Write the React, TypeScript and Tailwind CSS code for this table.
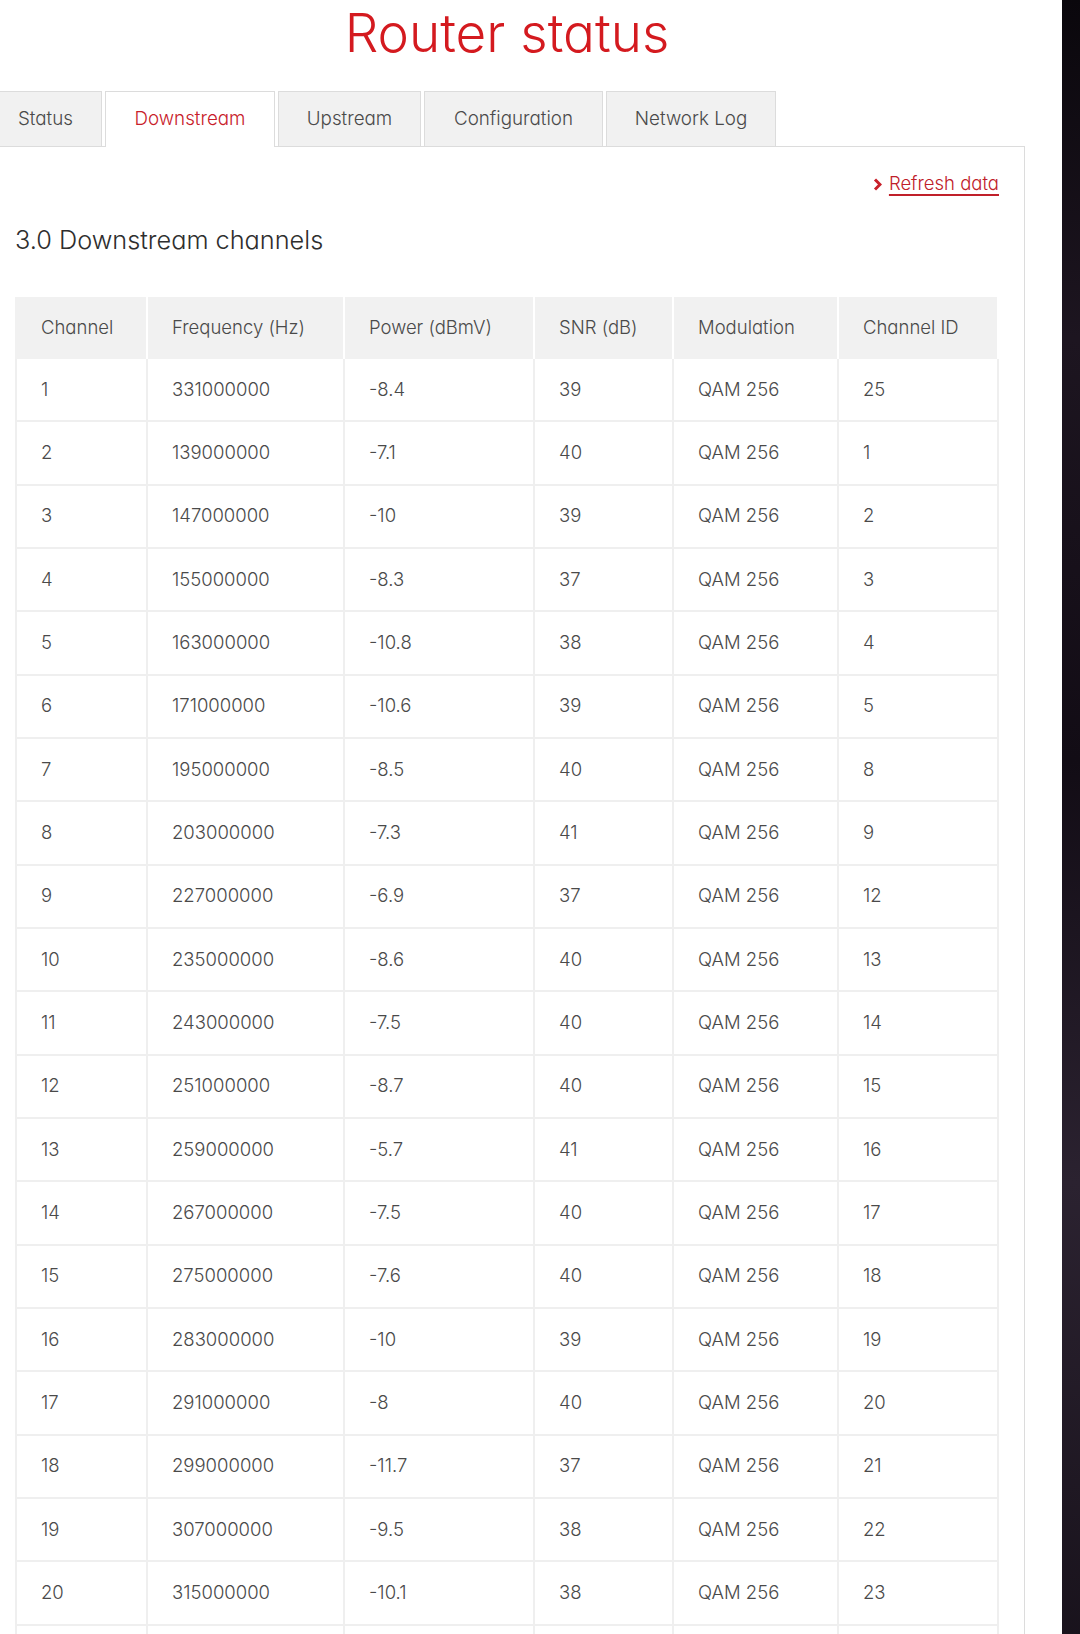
import React from 'react'

type Row = [number, string, string, number, number]

const rows: Row[] = [
  [1, '331000000', '-8.4', 39, 25],
  [2, '139000000', '-7.1', 40, 1],
  [3, '147000000', '-10', 39, 2],
  [4, '155000000', '-8.3', 37, 3],
  [5, '163000000', '-10.8', 38, 4],
  [6, '171000000', '-10.6', 39, 5],
  [7, '195000000', '-8.5', 40, 8],
  [8, '203000000', '-7.3', 41, 9],
  [9, '227000000', '-6.9', 37, 12],
  [10, '235000000', '-8.6', 40, 13],
  [11, '243000000', '-7.5', 40, 14],
  [12, '251000000', '-8.7', 40, 15],
  [13, '259000000', '-5.7', 41, 16],
  [14, '267000000', '-7.5', 40, 17],
  [15, '275000000', '-7.6', 40, 18],
  [16, '283000000', '-10', 39, 19],
  [17, '291000000', '-8', 40, 20],
  [18, '299000000', '-11.7', 37, 21],
  [19, '307000000', '-9.5', 38, 22],
  [20, '315000000', '-10.1', 38, 23],
]

const tabs = [
  { label: 'Status', w: 'w-[102px] border-l-0 justify-start pl-[18px]' },
  { label: 'Downstream', w: 'w-[170px]', active: true },
  { label: 'Upstream', w: 'w-[143px]' },
  { label: 'Configuration', w: 'w-[179px]' },
  { label: 'Network Log', w: 'w-[170px]' },
]

const headers = [
  { label: 'Channel', w: 'w-[133px] border-l-2 border-l-[#f1f1f1]' },
  { label: 'Frequency (Hz)', w: 'w-[197px]' },
  { label: 'Power (dBmV)', w: 'w-[190px]' },
  { label: 'SNR (dB)', w: 'w-[139px]' },
  { label: 'Modulation', w: 'w-[165px]' },
  { label: 'Channel ID', w: 'w-[160px]' },
]

function Chevron() {
  return (
    <svg width="9" height="13" viewBox="0 0 9 13" className="mr-[7px] mt-[2px]">
      <path d="M2 1.5 L7 6.5 L2 11.5" fill="none" stroke="#c8202a" strokeWidth="3" />
    </svg>
  )
}

export default function App() {
  const cell = 'h-[63.33px] pl-[24px] text-left align-middle border-b-2 border-r-2 border-[#efefef]'
  return (
    <div className="flex min-h-screen bg-white font-['Inter','Noto_Sans',sans-serif] font-light text-[#4a4a4a] [font-feature-settings:'cv11']">
      <div className="w-[1062px] shrink-0">
        <h1 className="w-[1014px] pt-[7px] text-center text-[53px] leading-none font-light text-[#d41a1f]">
          Router status
        </h1>

        <div className="mt-[31px] flex h-[55px] items-end gap-[3px]">
          {tabs.map((t) => (
            <div
              key={t.label}
              className={`flex items-center justify-center border border-b-0 border-[#dcdcdc] text-[18.8px] ${t.w} ${
                t.active ? 'relative z-10 -mb-px h-[56px] bg-white text-[#c8202a]' : 'h-[55px] bg-[#f1f1f1] text-[#4a4a4a]'
              }`}
            >
              {t.label}
            </div>
          ))}
        </div>

        <div className="w-[1025px] border-t border-r border-[#dcdcdc] pl-[15px] pr-[25px]">
          <div className="flex justify-end pt-[22px]">
            <a href="#" className="flex items-center text-[18.5px] leading-[28px] text-[#c0202a] underline decoration-[1.5px] underline-offset-[4px]">
              <Chevron />
              Refresh data
            </a>
          </div>

          <h2 className="mt-[27px] text-[25.3px] leading-[32px] font-light text-[#2e2e2e]">3.0 Downstream channels</h2>

          <table className="mt-[41px] w-[984px] table-fixed border-separate border-spacing-0 text-[18.5px]">
            <thead>
              <tr>
                {headers.map((h) => (
                  <th
                    key={h.label}
                    className={`h-[62px] bg-[#f1f1f1] pl-[24px] text-left align-middle font-light border-r-2 border-white ${h.w}`}
                  >
                    {h.label}
                  </th>
                ))}
              </tr>
            </thead>
            <tbody>
              {rows.map((r) => (
                <tr key={r[0]}>
                  <td className={`${cell} border-l-2`}>{r[0]}</td>
                  <td className={cell}>{r[1]}</td>
                  <td className={cell}>{r[2]}</td>
                  <td className={cell}>{r[3]}</td>
                  <td className={cell}>QAM 256</td>
                  <td className={cell}>{r[4]}</td>
                </tr>
              ))}
              {/* next row continues below the fold */}
              <tr>
                <td className={`${cell} border-l-2`} />
                <td className={cell} />
                <td className={cell} />
                <td className={cell} />
                <td className={cell} />
                <td className={cell} />
              </tr>
            </tbody>
          </table>
        </div>
      </div>
      <div className="w-[18px] shrink-0 bg-[linear-gradient(180deg,#0a070c_0%,#1d1520_20%,#120c15_45%,#2b2230_70%,#17111a_100%)]" />
    </div>
  )
}
